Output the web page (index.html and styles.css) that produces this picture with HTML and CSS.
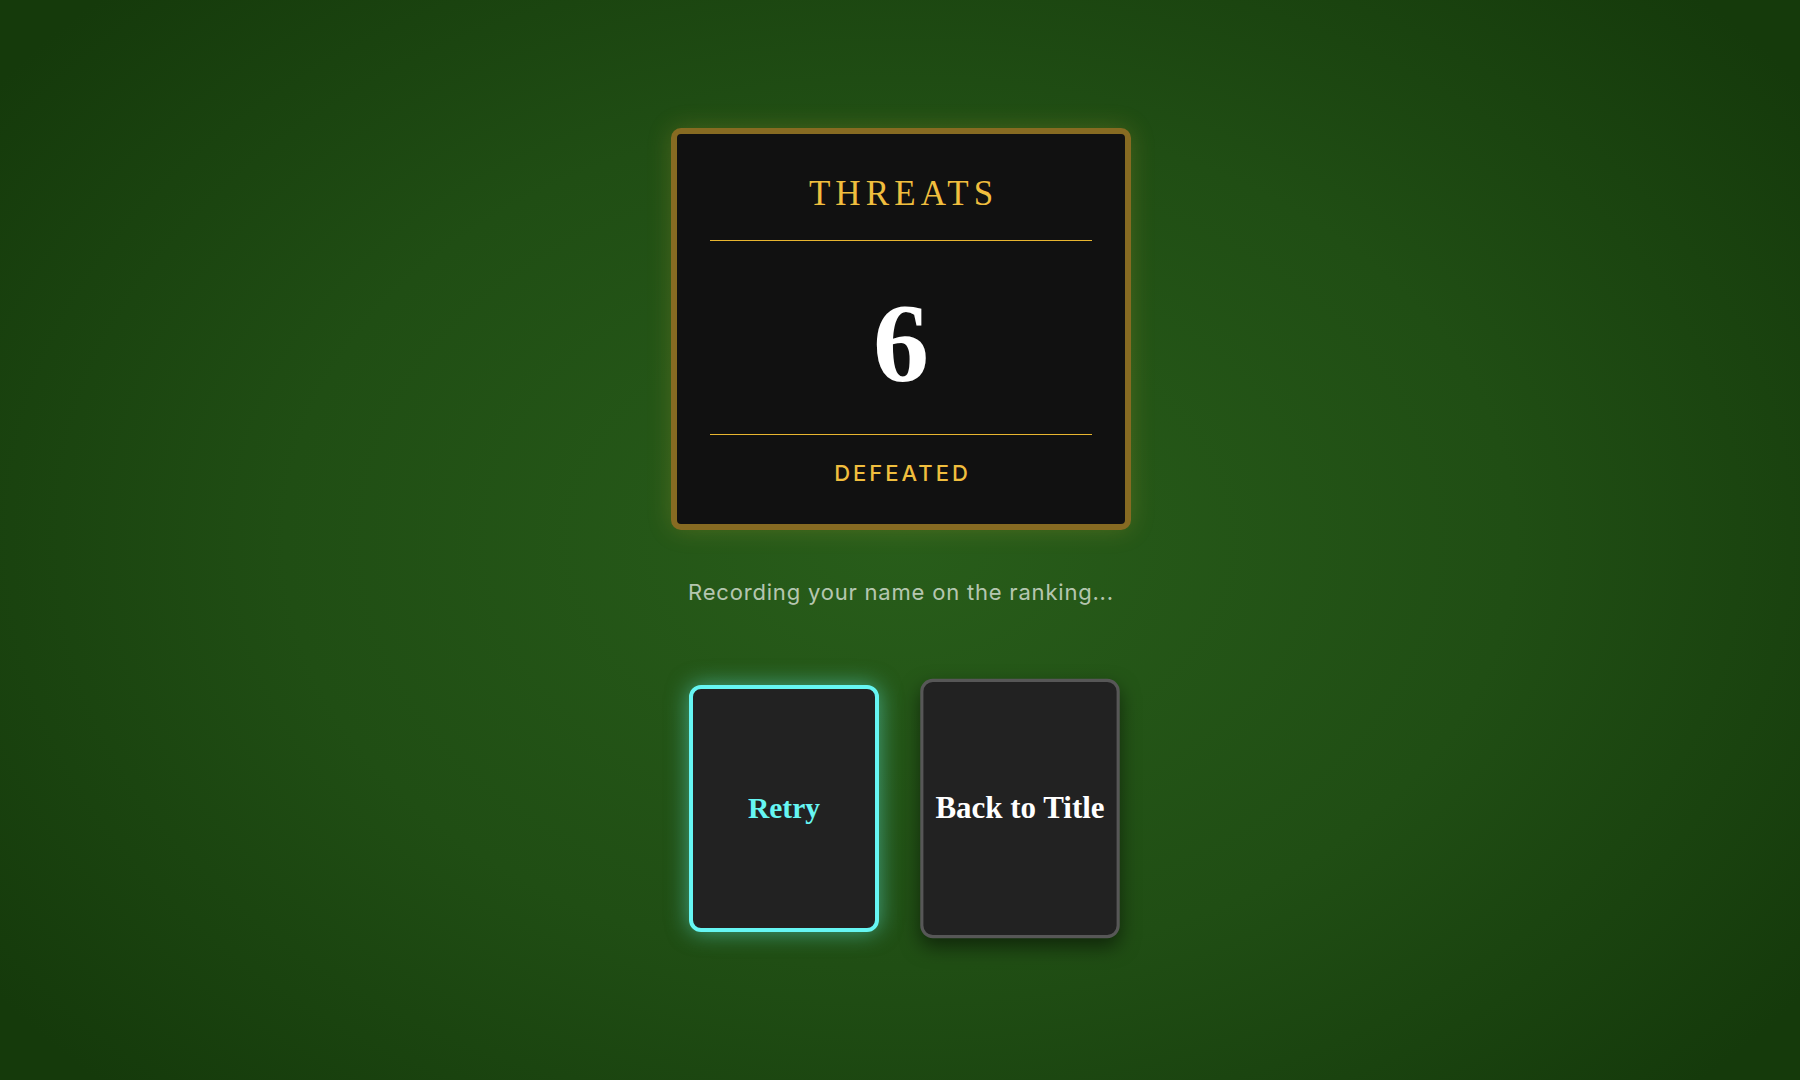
FILE: index.html
```html
<!DOCTYPE html>
<html>
<head>
    <title>Game Over</title>
    <link rel="stylesheet" href="styles.css">
</head>
<body>
    <div class="score-card">
        <div class="score-title">THREATS</div>
        <div class="score-line"></div>
        <div class="score-value">6</div>
        <div class="score-line score-line-bottom"></div>
        <div class="score-label">DEFEATED</div>
    </div>

    <p class="status">Recording your name on the ranking...</p>

    <div class="menu">
        <button class="menu-card selected">Retry</button>
        <button class="menu-card hovered">Back to Title</button>
    </div>
</body>
</html>
```

FILE: styles.css
```css
body {
    margin: 0;
    height: 100vh;
    display: flex;
    flex-direction: column;
    align-items: center;
    background: radial-gradient(ellipse 62% 72% at 50% 50%, #285d1a 0%, #204e14 55%, #153a0b 100%);
    font-family: Inter, "Liberation Sans", sans-serif;
    overflow: hidden;
}

/* score panel */
.score-card {
    box-sizing: border-box;
    width: 460px;
    margin-top: 128px;
    margin-left: 2px;
    padding: 40px 33px 37px;
    background-color: #111;
    border: 6px solid #876b22;
    border-radius: 10px;
    box-shadow: 0 0 24px rgba(212, 175, 55, 0.22);
    text-align: center;
}

.score-title {
    font-family: "Liberation Serif", serif;
    font-size: 35px;
    line-height: 40px;
    letter-spacing: 5.1px;
    margin-right: -5.1px;
    color: #f0be3e;
}

.score-line {
    height: 1px;
    margin-top: 26px;
    background-color: #e8b630;
}

.score-line-bottom {
    margin-top: 35px;
}

.score-value {
    font-family: "Liberation Serif", serif;
    font-weight: bold;
    font-size: 112px;
    line-height: 112px;
    margin-top: 46px;
    color: #fff;
}

.score-label {
    font-size: 22px;
    font-weight: 500;
    line-height: 28px;
    letter-spacing: 3px;
    margin-right: -3px;
    margin-top: 24px;
    color: #f0be3e;
}

.status {
    margin: 48px 0 0 2px;
    font-size: 22px;
    line-height: 28px;
    letter-spacing: 0.8px;
    color: rgba(255, 255, 255, 0.68);
}

/* menu cards */
.menu {
    display: flex;
    align-items: center;
    gap: 46px;
    margin-top: 79px;
    margin-left: 4px;
}

.menu-card {
    box-sizing: border-box;
    width: 190px;
    height: 247px;
    padding: 0;
    background-color: #222;
    border: 3px solid #575757;
    border-radius: 12px;
    font-family: "Liberation Serif", serif;
    font-weight: bold;
    font-size: 29.5px;
    color: #fff;
    cursor: pointer;
}

.menu-card.selected {
    border: 4px solid #66f6f3;
    color: #66f6f3;
    box-shadow: 0 0 22px rgba(102, 246, 243, 0.5);
}

.menu-card.hovered {
    transform: scale(1.05);
    box-shadow: 0 8px 18px rgba(0, 0, 0, 0.5);
}
```
